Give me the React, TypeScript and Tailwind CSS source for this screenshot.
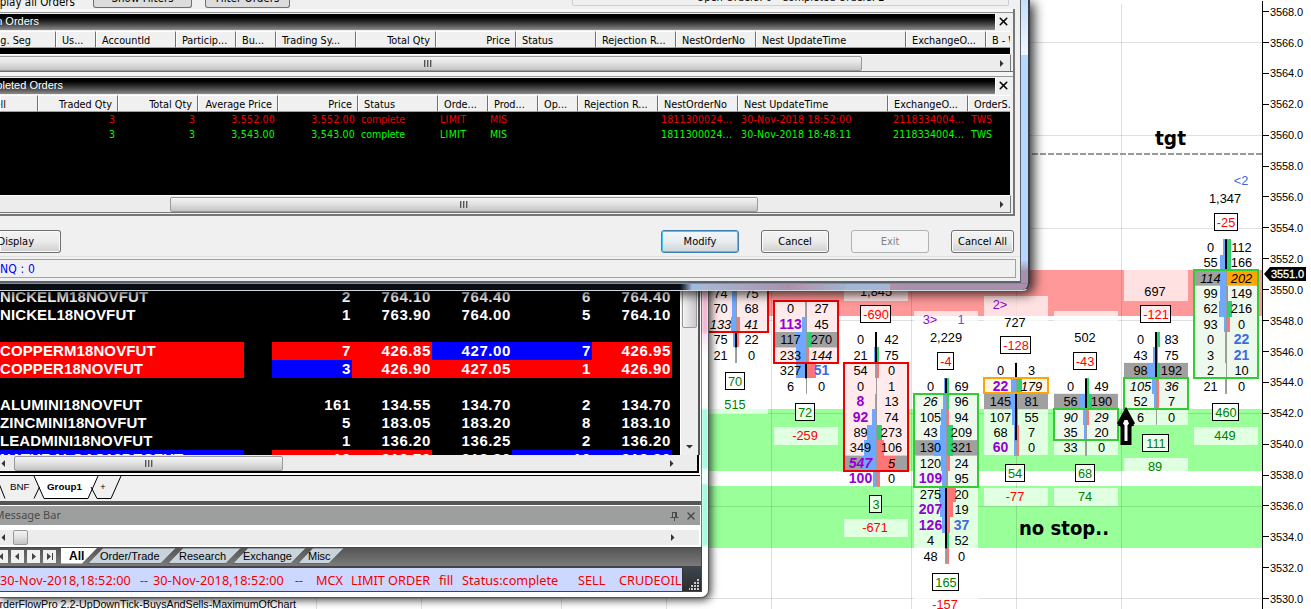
import React from 'react';
import { X } from 'lucide-react';

type CellStyle = 'p' | 'b' | 'i' | 'pi';

interface Row {
    l: string;
    r: string;
    ls?: CellStyle;
    rs?: CellStyle;
    // bar widths, delta colour of the right bar
    bl?: number;
    br?: number;
    c?: 'g' | 'r';
    gray?: boolean;
}

interface Column {
    x: number;
    start: number;
    rows: Row[];
    box: [number, number, string, string];
    bodies: [number, number][];
}

interface Label {
    x: number;
    y: number;
    text: string;
    color: string;
    boxed?: boolean;
    plate?: boolean;
}

const ROW = 15.45;
const rowTop = (n: number) => 270.2 + n * ROW;

const RED = '#ff0000';
const GREEN = '#008000';

const columns: Column[] = [
    {
        x: 736, start: 1, box: [0, 4, '#f00000', '#ffebeb'], bodies: [[4, 5]],
        rows: [
            { l: '74', r: '75', bl: 4 },
            { l: '70', r: '68', bl: 4 },
            { l: '133', r: '41', ls: 'i', rs: 'i', bl: 5, br: 3, c: 'r' },
            { l: '75', r: '22', bl: 3, br: 2, c: 'r' },
            { l: '21', r: '0', bl: 1 },
        ],
    },
    {
        x: 806, start: 2, box: [2, 6, '#f00000', '#ffebeb'], bodies: [[6, 7]],
        rows: [
            { l: '0', r: '27', bl: 1 },
            { l: '113', r: '45', ls: 'p', bl: 4 },
            { l: '117', r: '270', bl: 10, br: 5, c: 'g', gray: true },
            { l: '233', r: '144', rs: 'i', bl: 10, br: 2, c: 'r' },
            { l: '327', r: '51', rs: 'b', bl: 10, br: 9, c: 'r' },
            { l: '6', r: '0' },
        ],
    },
    {
        x: 876, start: 4, box: [6, 13, '#f00000', '#ffebeb'], bodies: [[4, 6]],
        rows: [
            { l: '0', r: '42' },
            { l: '21', r: '75', bl: 2, br: 2, c: 'g' },
            { l: '54', r: '0', bl: 1, br: 2, c: 'r' },
            { l: '0', r: '1' },
            { l: '8', r: '13', ls: 'p', bl: 1 },
            { l: '92', r: '74', ls: 'p', bl: 4 },
            { l: '89', r: '273', bl: 9, br: 5, c: 'g' },
            { l: '349', r: '106', bl: 12, br: 7, c: 'r' },
            { l: '547', r: '5', ls: 'pi', rs: 'i', bl: 15, br: 18, c: 'r', gray: true },
            { l: '100', r: '0', ls: 'p', bl: 3, br: 3, c: 'r' },
        ],
    },
    {
        x: 946, start: 7, box: [8, 14, '#32cd32', '#eef9ee'], bodies: [[7, 8], [14, 18]],
        rows: [
            { l: '0', r: '69', bl: 2, br: 2, c: 'g' },
            { l: '26', r: '96', ls: 'i', bl: 3, br: 2, c: 'g' },
            { l: '105', r: '94', bl: 5, br: 2, c: 'r' },
            { l: '43', r: '209', bl: 6, br: 6, c: 'g' },
            { l: '130', r: '321', bl: 12, br: 6, c: 'g', gray: true },
            { l: '120', r: '24', bl: 5, br: 3, c: 'r' },
            { l: '109', r: '95', ls: 'p', bl: 4, br: 1, c: 'r' },
            { l: '275', r: '20', bl: 7, br: 9, c: 'r' },
            { l: '207', r: '19', ls: 'p', bl: 6, br: 6, c: 'r' },
            { l: '126', r: '37', ls: 'p', rs: 'b', bl: 4, br: 3, c: 'r' },
            { l: '4', r: '52', bl: 1, br: 2, c: 'g' },
            { l: '48', r: '0', bl: 1, br: 2, c: 'r' },
        ],
    },
    {
        x: 1016, start: 6, box: [7, 8, '#ffa500', '#fff5e6'], bodies: [[6, 7], [8, 11]],
        rows: [
            { l: '0', r: '3' },
            { l: '22', r: '179', ls: 'p', rs: 'i', bl: 5, br: 5, c: 'g' },
            { l: '145', r: '81', bl: 6, br: 1, c: 'r', gray: true },
            { l: '107', r: '55', bl: 4, br: 1, c: 'r' },
            { l: '68', r: '7', bl: 2, br: 2, c: 'r' },
            { l: '60', r: '0', ls: 'p', bl: 2, br: 2, c: 'r' },
        ],
    },
    {
        x: 1086, start: 7, box: [9, 11, '#32cd32', '#eef9ee'], bodies: [[7, 9]],
        rows: [
            { l: '0', r: '49', br: 2, c: 'g' },
            { l: '56', r: '190', bl: 6, br: 5, c: 'g', gray: true },
            { l: '90', r: '29', ls: 'i', rs: 'i', bl: 3, br: 2, c: 'r' },
            { l: '35', r: '20', bl: 2 },
            { l: '33', r: '0', bl: 1 },
        ],
    },
    {
        x: 1156, start: 4, box: [7, 9, '#32cd32', '#eef9ee'], bodies: [[4, 7]],
        rows: [
            { l: '0', r: '83', bl: 1, br: 3, c: 'g' },
            { l: '43', r: '75', bl: 3, br: 1, c: 'g' },
            { l: '98', r: '192', bl: 8, br: 3, c: 'g', gray: true },
            { l: '105', r: '36', ls: 'i', rs: 'i', bl: 4, br: 2, c: 'r' },
            { l: '52', r: '7', bl: 2, br: 2, c: 'r' },
            { l: '6', r: '0' },
        ],
    },
    {
        x: 1226, start: -2, box: [0, 7, '#32cd32', '#eef9ee'], bodies: [[-2, 0]],
        rows: [
            { l: '0', r: '112', bl: 3, br: 4, c: 'g' },
            { l: '55', r: '166', bl: 6, br: 4, c: 'g' },
            { l: '114', r: '202', ls: 'i', rs: 'i', bl: 6 },
            { l: '99', r: '149', bl: 6, br: 1, c: 'g' },
            { l: '62', r: '216', bl: 7, br: 5, c: 'g' },
            { l: '93', r: '0', bl: 2, br: 3, c: 'r' },
            { l: '0', r: '22', rs: 'b', bl: 1 },
            { l: '3', r: '21', rs: 'b', bl: 1 },
            { l: '2', r: '10' },
            { l: '21', r: '0', bl: 1 },
        ],
    },
];

const labels: Label[] = [
    { x: 735, y: 381, text: '70', color: GREEN, boxed: true },
    { x: 735, y: 404, text: '515', color: GREEN, plate: true },
    { x: 805, y: 412, text: '72', color: GREEN, boxed: true },
    { x: 805, y: 435, text: '-259', color: RED, plate: true },
    { x: 876, y: 291, text: '1,845', color: '#000', plate: true },
    { x: 876, y: 314, text: '-690', color: RED, boxed: true },
    { x: 876, y: 504, text: '3', color: GREEN, boxed: true },
    { x: 875, y: 527, text: '-671', color: RED, plate: true },
    { x: 930, y: 319, text: '3>', color: '#9400d3' },
    { x: 961, y: 319, text: '1', color: '#7448dd' },
    { x: 946, y: 337, text: '2,229', color: '#000' },
    { x: 946, y: 361, text: '-4', color: RED, boxed: true },
    { x: 946, y: 582, text: '165', color: GREEN, boxed: true },
    { x: 945, y: 604, text: '-157', color: RED, plate: true },
    { x: 1000, y: 304, text: '2>', color: '#9400d3' },
    { x: 1015, y: 322, text: '727', color: '#000' },
    { x: 1016, y: 345, text: '-128', color: RED, boxed: true },
    { x: 1015, y: 473, text: '54', color: GREEN, boxed: true },
    { x: 1015, y: 496, text: '-77', color: RED, plate: true },
    { x: 1085, y: 337, text: '502', color: '#000' },
    { x: 1085, y: 361, text: '-43', color: RED, boxed: true },
    { x: 1085, y: 473, text: '68', color: GREEN, boxed: true },
    { x: 1085, y: 496, text: '74', color: GREEN, plate: true },
    { x: 1155, y: 291, text: '697', color: '#000' },
    { x: 1156, y: 314, text: '-121', color: RED, boxed: true },
    { x: 1156, y: 443, text: '111', color: GREEN, boxed: true },
    { x: 1155, y: 466, text: '89', color: GREEN, plate: true },
    { x: 1241, y: 180, text: '<2', color: '#4169e1' },
    { x: 1225, y: 198, text: '1,347', color: '#000' },
    { x: 1226, y: 222, text: '-25', color: RED, boxed: true },
    { x: 1226, y: 412, text: '460', color: GREEN, boxed: true },
    { x: 1225, y: 435, text: '449', color: GREEN, plate: true },
];

// translucent strips behind the columns: x, top, bottom
const plates: [number, number, number][] = [
    [736, 285, 364],
    [946, 311, 564],
    [1016, 296, 455],
    [1086, 311, 455],
    [1156, 270, 301],
    [1156, 332, 425],
];

const prices = Array.from({ length: 20 }, (_, i) => 3568 - i * 2);

const cellFont = (s?: CellStyle) => ({
    fontWeight: s && s !== 'i' ? 700 : 400,
    fontStyle: s === 'i' || s === 'pi' ? 'italic' : 'normal',
    fontSize: s && s !== 'i' ? 14 : 12.8,
    fill: s === 'p' || s === 'pi' ? '#9400d3' : s === 'b' ? '#4169e1' : '#000',
});

const boxWidth = (text: string) => (text.startsWith('-') ? 8.5 : 5) + text.replace('-', '').length * 7;

const plateLeft = (x: number) => Math.floor(x / 10) * 10 + 6 - 32;

const FootprintColumn = ({ col }: { col: Column }) => {
    const [from, to, stroke, fill] = col.box;
    const last = col.start + col.rows.length;
    return (
        <g>
            <rect x={col.x - 31.5} y={rowTop(from)} width={63} height={(to - from) * ROW} fill={fill} />
            {col.rows.map((row, i) => {
                const y = rowTop(col.start + i);
                return (
                    <g key={i}>
                        {row.gray && <rect x={col.x - 32} y={y} width={64} height={ROW} fill="#a0a0a0" />}
                        {row.r === '202' && (
                            <>
                                <rect x={col.x - 32} y={y} width={32} height={ROW} fill="#a0a0a0" />
                                <rect x={col.x + 1} y={y} width={31} height={ROW} fill="#ffa500" />
                            </>
                        )}
                    </g>
                );
            })}
            <line x1={col.x + 0.5} x2={col.x + 0.5} y1={rowTop(col.start)} y2={rowTop(last)} stroke="#999" />
            {col.rows.map((row, i) => {
                const y = rowTop(col.start + i);
                return (
                    <g key={i} shapeRendering="crispEdges">
                        {row.bl && <rect x={col.x - row.bl} y={y} width={row.bl} height={ROW} fill="#6ea8ff" />}
                        {row.br && <rect x={col.x + 1} y={y} width={row.br} height={ROW} fill={row.c === 'g' ? '#2fd070' : '#ff7474'} />}
                    </g>
                );
            })}
            {col.bodies.map(([a, b]) => (
                <rect key={a} x={col.x - 1} y={rowTop(a)} width={2} height={(b - a) * ROW} fill="#000" />
            ))}
            <rect x={col.x - 32} y={Math.round(rowTop(from))} width={64} height={Math.round((to - from) * ROW)} fill="none" stroke={stroke} strokeWidth={2} />
            {col.rows.map((row, i) => {
                const y = Math.round(rowTop(col.start + i) + 12.3);
                return (
                    <g key={i}>
                        <text x={col.x - 15.5} y={y} {...cellFont(row.ls)}>{row.l}</text>
                        <text x={col.x + 15.5} y={y} {...cellFont(row.rs)}>{row.r}</text>
                    </g>
                );
            })}
        </g>
    );
};

const Chart = () => (
    <svg className="absolute inset-0" width={1311} height={609} fontFamily="'Liberation Sans', Arial, sans-serif" fontSize={12.8} textAnchor="middle">
        <rect x={700} y={270} width={562} height={46} fill="#ff9999" />
        <rect x={700} y={409} width={562} height={62} fill="#99ff99" />
        <rect x={700} y={486} width={562} height={62} fill="#99ff99" />
        <g stroke="#000" strokeOpacity={0.12}>
            {[42.5, 135.5, 228.5, 320.5, 413.5, 506.5, 598.5].map((y) => (
                <line key={y} x1={0} x2={1262} y1={y} y2={y} />
            ))}
            {[71.5, 211.5, 316.5, 421.5, 561.5, 666.5, 771.5, 911.5, 1016.5, 1121.5].map((x) => (
                <line key={x} x1={x} x2={x} y1={4} y2={609} />
            ))}
        </g>
        <line x1={1032} x2={1262} y1={154} y2={154} stroke="#999" strokeWidth={2} strokeDasharray="6 2" />
        {plates.map(([x, top, bottom]) => (
            <rect key={`${x}-${top}`} x={x - 32} y={top} width={64} height={bottom - top} fill="#fff" fillOpacity={0.7} />
        ))}
        {labels.filter((l) => l.plate).map((l) => (
            <rect key={`${l.x}-${l.y}`} x={plateLeft(l.x)} y={l.y - 8} width={64} height={18} fill="#fff" fillOpacity={0.7} />
        ))}
        {columns.map((col) => <FootprintColumn key={col.x} col={col} />)}
        {labels.map((l) => {
            const w = boxWidth(l.text);
            return (
                <g key={`${l.x}-${l.y}`}>
                    {l.boxed && (
                        <rect x={Math.round(l.x - w / 2) - 0.5} y={l.y - 8.5} width={Math.round(w)} height={17} fill="#fff" fillOpacity={0.8} stroke="#000" />
                    )}
                    <text x={l.x} y={l.y + 4.5} fill={l.color}>{l.text}</text>
                </g>
            );
        })}
        <rect x={1262} y={1} width={1} height={608} fill="#000" />
        <g textAnchor="start" fontSize={11}>
            {prices.map((p, i) => (
                <g key={p}>
                    <rect x={1263} y={Math.round(11 + i * 30.9)} width={6} height={1} fill="#000" />
                    <text x={1270} y={Math.round(15.6 + i * 30.9)} textLength={33}>{p}.0</text>
                </g>
            ))}
            <path d="M1264 274 L1270 267 H1306 V281 H1270 Z" fill="#000" />
            <text x={1271} y={278} fill="#fff" stroke="#fff" strokeWidth={0.3} textLength={33}>3551.0</text>
        </g>
        <g fontFamily="'DejaVu Sans Condensed', 'DejaVu Sans', sans-serif" fontWeight={700} fontSize={19.5} textAnchor="start">
            <text x={1155} y={145} textLength={31} lengthAdjust="spacingAndGlyphs">tgt</text>
            <text x={1019} y={535} textLength={90} lengthAdjust="spacingAndGlyphs">no stop..</text>
        </g>
        <path d="M1126 411 L1132.5 423 L1129.5 426 V443 H1122.5 V426 L1119.5 423 Z" fill="#fff" stroke="#000" strokeWidth={4} strokeLinejoin="miter" />
        <path d="M1126 408 L1134 426 H1130 L1127.5 420 H1124.5 L1122 426 H1118 Z" fill="#000" />
    </svg>
);

const Arrow = ({ dir, className = '' }: { dir: 'left' | 'right' | 'down'; className?: string }) => (
    <svg width="7" height="7" viewBox="0 0 7 7" className={className}>
        {dir === 'left' && <path d="M5 0 V7 L1.5 3.5 Z" fill="#333" />}
        {dir === 'right' && <path d="M2 0 V7 L5.5 3.5 Z" fill="#333" />}
        {dir === 'down' && <path d="M0 2 H7 L3.5 5.5 Z" fill="#333" />}
    </svg>
);

const Grip = () => (
    <div className="flex gap-px">
        <div className="h-[7px] w-[2px] border-l border-[#555] bg-[#aaa]" />
        <div className="h-[7px] w-[2px] border-l border-[#555] bg-[#aaa]" />
        <div className="h-[7px] w-[2px] border-l border-[#555] bg-[#aaa]" />
    </div>
);

const thumb = 'flex h-[15px] items-center justify-center rounded-xs border border-[#999] bg-linear-to-b from-[#f4f4f4] via-[#e2e2e2] via-45% to-[#c4c4c8]';

const openHeaders = [
    { text: 'Exchg. Seg', w: 'w-[56px]', cls: 'justify-end pr-[24px]' },
    { text: 'Us...', w: 'w-[40px]' },
    { text: 'AccountId', w: 'w-[80px]' },
    { text: 'Particip...', w: 'w-[60px]' },
    { text: 'Bu...', w: 'w-[40px]' },
    { text: 'Trading Sy...', w: 'w-[80px]' },
    { text: 'Total Qty', w: 'w-[80px]', cls: 'justify-end pr-[5px]' },
    { text: 'Price', w: 'w-[80px]', cls: 'justify-end pr-[5px]' },
    { text: 'Status', w: 'w-[80px]' },
    { text: 'Rejection R...', w: 'w-[80px]' },
    { text: 'NestOrderNo', w: 'w-[80px]' },
    { text: 'Nest UpdateTime', w: 'w-[150px]' },
    { text: 'ExchangeO...', w: 'w-[80px]' },
    { text: 'B - W', w: 'w-[40px]' },
];

const completedHeaders = [
    { text: 'Buy/Sell', w: 'w-[38px]', cls: 'justify-end pr-[31px]' },
    { text: 'Traded Qty', w: 'w-[80px]', cls: 'justify-end pr-[5px]' },
    { text: 'Total Qty', w: 'w-[80px]', cls: 'justify-end pr-[5px]' },
    { text: 'Average Price', w: 'w-[80px]', cls: 'justify-end pr-[5px]' },
    { text: 'Price', w: 'w-[80px]', cls: 'justify-end pr-[5px]' },
    { text: 'Status', w: 'w-[80px]' },
    { text: 'Orde...', w: 'w-[50px]' },
    { text: 'Prod...', w: 'w-[50px]' },
    { text: 'Op...', w: 'w-[40px]' },
    { text: 'Rejection R...', w: 'w-[80px]' },
    { text: 'NestOrderNo', w: 'w-[80px]' },
    { text: 'Nest UpdateTime', w: 'w-[150px]' },
    { text: 'ExchangeO...', w: 'w-[80px]' },
    { text: 'OrderS...', w: 'w-[60px]' },
];

const completedOrders = [
    { price: '3,552.00', time: '30-Nov-2018 18:52:00', color: 'text-[#f00000]' },
    { price: '3,543.00', time: '30-Nov-2018 18:48:11', color: 'text-[#00ff00]' },
];

const HeaderRow = ({ items }: { items: { text: string; w: string; cls?: string }[] }) => (
    <div className="flex h-[17px] w-[1010px] overflow-hidden bg-[#f0f0f0] text-[10.8px] leading-[14px]">
        {items.map((h, i) => (
            <div
                key={i}
                className={`flex shrink-0 items-start overflow-hidden whitespace-nowrap border-t border-r border-t-white border-r-[#707070] border-b border-b-[#a0a0a0] pt-[2px] pl-[6px] shadow-[inset_1px_0_0_#fff] ${h.w} ${h.cls ?? ''}`}
            >
                {h.text}
            </div>
        ))}
    </div>
);

const PaneTitle = ({ text, w }: { text: string; w: string }) => (
    <div className="flex h-[17px]">
        <div className="h-[16px] w-[995px] border-t border-black bg-linear-to-b from-black to-[#8c8c8c] font-['Liberation_Sans',Arial,sans-serif] text-[11px] leading-[13px] text-white">
            <div className={`flex justify-end overflow-hidden whitespace-nowrap ${w}`}>{text}</div>
        </div>
        <div className="flex w-[15px] items-center justify-center border-l border-white bg-[#f0f0f0] pb-[3px]">
            <X size={13} strokeWidth={2.8} color="#000" className="shrink-0" />
        </div>
    </div>
);

const button = 'flex h-[23px] items-center justify-center rounded-[3px] border pt-px whitespace-nowrap';
const buttonFace = 'border-[#707070] bg-linear-to-b from-[#f3f3f3] via-[#ebebeb] via-50% to-[#cfcfcf] shadow-[inset_0_0_0_1px_#fbfbfb]';

const OrdersWindow = () => (
    <div className="absolute top-0 left-0 h-[291px] w-[1030px] overflow-hidden rounded-br-lg border-r-2 border-b border-[#3a3f4a] border-b-[#cfd8dc] bg-[#0a0e13] font-['DejaVu_Sans_Condensed','DejaVu_Sans',sans-serif] text-[10.5px] text-black">
        <div className="flex h-[283px]">
            <div className="h-[283px] w-[1021px] border-r border-b-2 border-[#5c6470] bg-[#f0f0f0]">
                {/* Filter strip, cut off by the top edge */}
                <div className="flex h-[9px] items-start">
                    <div className="-mt-[5px] flex w-[75px] justify-end whitespace-nowrap text-[11.5px] leading-[14px]">Display all Orders</div>
                    <div className="ml-[18px] flex h-[8px] w-[99px] justify-center rounded-b-[3px] border border-t-0 border-[#707070] bg-[#dcdcdc]">
                        <span className="-mt-[10px] text-[11.5px]">Show Filters</span>
                    </div>
                    <div className="ml-[13px] flex h-[8px] w-[85px] justify-center rounded-b-[3px] border border-t-0 border-[#707070] bg-[#dcdcdc]">
                        <span className="-mt-[10px] text-[11.5px]">Filter Orders</span>
                    </div>
                    <div className="ml-[282px] flex h-[6px] w-[437px] justify-center rounded-b-[2px] border border-t-0 border-[#c5d0dc]">
                        <span className="-mt-[10px] whitespace-pre text-[11px]">Open Orders: 0   Completed Orders: 2</span>
                    </div>
                </div>
                <div className="h-[207px] w-[1015px] border-r-2 border-b-2 border-[#777]">
                    <div className="mb-px h-[4px] border-b border-[#909090] bg-[#f8f8f8]" />
                    <PaneTitle text="Open Orders" w="w-[39px]" />
                    <HeaderRow items={openHeaders} />
                    <div className="h-[6px] w-[1010px] bg-black" />
                    <div className="flex h-[17px] w-[1011px] items-center border-t border-r border-white border-r-[#777] bg-[#ececec]">
                        <div className={`${thumb} -ml-[6px] w-[868px]`}><Grip /></div>
                        <Arrow dir="right" className="ml-[136px]" />
                    </div>
                    <div className="mb-px h-[6px] border-t border-b border-[#707070] border-b-[#999] bg-[#f4f4f4]" />
                    <PaneTitle text="Completed Orders" w="w-[63px]" />
                    <HeaderRow items={completedHeaders} />
                    <div className="h-[83px] w-[1010px] overflow-hidden bg-black whitespace-nowrap">
                        {completedOrders.map((o) => (
                            <div key={o.time} className={`flex h-[15px] items-center ${o.color}`}>
                                <div className="w-[115px] text-right">3</div>
                                <div className="w-[80px] text-right">3</div>
                                <div className="w-[80px] text-right tracking-[0.2px]">{o.price}</div>
                                <div className="w-[80px] text-right tracking-[0.2px]">{o.price}</div>
                                <div className="w-[85px] pl-[6px]">complete</div>
                                <div className="w-[50px] tracking-[0.3px]">LIMIT</div>
                                <div className="w-[171px]">MIS</div>
                                <div className="w-[80px] tracking-[0.15px]">1811300024...</div>
                                <div className="w-[152px] tracking-[0.2px]">{o.time}</div>
                                <div className="w-[78px] tracking-[0.15px]">2118334004...</div>
                                <div>TWS</div>
                            </div>
                        ))}
                    </div>
                    <div className="flex h-[18px] w-[1011px] items-center border-t border-r border-b border-white border-r-[#777] border-b-[#777] bg-[#ececec]">
                        <div className={`${thumb} ml-[170px] w-[588px]`}><Grip /></div>
                        <Arrow dir="right" className="ml-[240px]" />
                    </div>
                </div>
                <div className="flex h-[41px] items-start border-b border-[#e0e0e0] pt-[14px] text-[11px]">
                    <div className={`${button} ${buttonFace} w-[61px] justify-end rounded-l-none border-l-0 pr-[26px]`}>Display</div>
                    <div className={`${button} ml-[600px] w-[78px] border-[#3c7fb1] bg-linear-to-b from-[#f0f6f9] via-[#e8edf0] via-50% to-[#cfd4d8] shadow-[inset_0_0_0_1px_#46c8f0]`}>Modify</div>
                    <div className={`${button} ${buttonFace} ml-[22px] w-[68px]`}>Cancel</div>
                    <div className={`${button} ml-[22px] w-[78px] border-[#adb2b5] bg-[#f4f4f4] text-[#838383]`}>Exit</div>
                    <div className={`${button} ${buttonFace} ml-[22px] w-[63px]`}>Cancel All</div>
                </div>
                <div className="mt-[2px] flex h-[19px] w-[1016px] items-center border border-l-0 border-[#a0a0a0] pt-px text-[12px] tracking-[0.2px] text-[#0000ff]">NQ : 0</div>
            </div>
            <div className="w-[7px] bg-[#b5d8ff]">
                <div className="h-[55px] bg-linear-to-b from-[#c5defa] to-[#f2f8ff]" />
                <div className="mt-[205px] h-[23px] bg-linear-to-b from-[#b5d8ff] to-[#a890ac] to-50%" />
            </div>
        </div>
        <div className="flex h-[7px] border-t border-[#8a8a8a]">
            <div className="w-[680px] bg-[#0a0e13]" />
            <div className="w-[20px] bg-linear-to-r from-[#0a0e13] to-[#9dbce0] to-60%" />
            <div className="w-[90px] bg-linear-to-r from-[#a9b8d6] to-[#a890ac]" />
            <div className="w-[56px] bg-linear-to-r from-[#b590a8] to-[#a0b2d2]" />
            <div className="w-[44px] bg-[#a3b6d6]" />
            <div className="flex-1 bg-linear-to-r from-[#b590a8] to-[#a890ac] to-10%" />
        </div>
    </div>
);

interface Quote {
    name: string;
    nameBg?: string;
    cells: string[];
    bgs?: string[];
}

const R = 'bg-[#ff0000]';
const B = 'bg-[#0000ff]';

const quotes: Quote[] = [
    { name: 'NICKELM18NOVFUT', cells: ['2', '764.10', '764.40', '6', '764.40'] },
    { name: 'NICKEL18NOVFUT', cells: ['1', '763.90', '764.00', '5', '764.10'] },
    { name: '', cells: [] },
    { name: 'COPPERM18NOVFUT', nameBg: R, cells: ['7', '426.85', '427.00', '7', '426.95'], bgs: [R, R, B, B, R] },
    { name: 'COPPER18NOVFUT', nameBg: R, cells: ['3', '426.90', '427.05', '1', '426.90'], bgs: [B, R, R, R, R] },
    { name: '', cells: [] },
    { name: 'ALUMINI18NOVFUT', cells: ['161', '134.55', '134.70', '2', '134.70'] },
    { name: 'ZINCMINI18NOVFUT', cells: ['5', '183.05', '183.20', '8', '183.10'] },
    { name: 'LEADMINI18NOVFUT', cells: ['1', '136.20', '136.25', '2', '136.20'] },
    { name: 'NATURALGAS18DECFUT', nameBg: B, cells: ['10', '318.70', '318.80', '10', '318.80'], bgs: [R, R, '', B, B] },
];

const messageTabs = [
    { text: 'Order/Trade', w: 'w-[79px]' },
    { text: 'Research', w: 'w-[64px]' },
    { text: 'Exchange', w: 'w-[65px]' },
    { text: 'Misc', w: 'w-[40px]' },
];

const message = [
    { text: '30-Nov-2018,18:52:00', w: 'w-[140px]' },
    { text: '--', w: 'w-[13px]' },
    { text: '30-Nov-2018,18:52:00', w: 'w-[142px]' },
    { text: '--', w: 'w-[21px]' },
    { text: 'MCX', w: 'w-[35px]' },
    { text: 'LIMIT ORDER', w: 'w-[88px]' },
    { text: 'fill', w: 'w-[23px]' },
    { text: 'Status:complete', w: 'w-[116px]' },
    { text: 'SELL', w: 'w-[41px]' },
    { text: 'CRUDEOIL', w: 'w-[63px]' },
];

const navGlyphs = ['M7 2 V9 L3 5.5 Z M1.5 2 H2.5 V9 H1.5 Z', 'M7 2 V9 L3 5.5 Z', 'M4 2 V9 L8 5.5 Z', 'M3 2 V9 L7 5.5 Z M8 2 H9 V9 H8 Z'];

const MarketWindow = () => (
    <div className="absolute top-[200px] left-0 flex h-[398px] w-[709px] overflow-hidden rounded-br-lg border-r border-b border-[#555] bg-white pt-[88px] font-['Liberation_Sans',Arial,sans-serif] shadow-[2px_2px_8px_rgba(0,0,0,0.75)]">
        <div className="h-[304px] w-[702px] border-r border-b border-[#444]">
            {/* Quotes */}
            <div className="flex h-[167px] w-[700px] border-r-2 border-[#555] bg-[#f0f0f0]">
                <div className="h-[167px] w-[680px] overflow-hidden bg-black">
                    {quotes.map((q, i) => (
                        <div key={i} className="flex h-[18px] items-center text-[15px] leading-[18px] font-bold text-white">
                            <div className={`mr-[28px] h-[18px] w-[244px] tracking-[0.1px] whitespace-nowrap ${q.nameBg ?? ''}`}>{q.name}</div>
                            {q.cells.map((c, j) => (
                                <div key={j} className={`h-[18px] w-[80px] pr-[1px] text-right tracking-[0.6px] ${q.bgs ? q.bgs[j] : ''}`}>{c}</div>
                            ))}
                        </div>
                    ))}
                </div>
                <div className="flex w-[17px] flex-col items-center justify-between border-l border-white bg-[#eee] pb-[5px]">
                    <div className="h-[40px] w-[15px] rounded-xs border border-[#999] bg-linear-to-r from-[#f4f4f4] to-[#c8c8cc]" />
                    <Arrow dir="down" />
                </div>
            </div>
            <div className="flex h-[18px] w-[699px] items-center border-r-2 border-b-2 border-black bg-[#ececec]">
                <Arrow dir="left" className="mr-[7px]" />
                <div className={`${thumb} w-[269px]`}><Grip /></div>
                <Arrow dir="right" className="ml-[385px]" />
            </div>
            {/* Sheet tabs */}
            <div className="mt-[2px] h-[26px] w-[700px] border-t border-black bg-[#f0f0f0] text-[9.8px]">
                <div className="relative h-[24px]">
                    <svg width="130" height="24" className="absolute inset-0" fill="none" stroke="#000">
                        <path d="M34 0 L44 22.5 H88 L98 0 Z" fill="#fff" stroke="none" />
                        <path d="M-4 0 L5 22.5 M44 22.5 H88 M97 22.5 H111 M34 22.5 L39.5 11 M34 0 L44 22.5 M88 22.5 L98 0 M91 11 L97 22.5 M111 22.5 L121 0" />
                    </svg>
                    <div className="relative flex h-[22px] items-center">
                        <div className="w-[38px] pl-[10px]">BNF</div>
                        <div className="w-[55px] pl-[9px] font-bold">Group1</div>
                        <div className="pl-[7px]">+</div>
                    </div>
                </div>
            </div>
            <div className="h-[4px] bg-[#555]" />
            {/* Message bar */}
            <div className="flex h-[21px] w-[700px] items-center border-t border-b border-white bg-[#9d9f9e] text-[#4a4a4a]">
                <div className="flex w-[61px] justify-end overflow-hidden font-['Noto_Sans',sans-serif] text-[11px] whitespace-nowrap">Message Bar</div>
                <svg width="9" height="10" viewBox="0 0 9 10" className="ml-[609px]" fill="none" stroke="#4a4a4a">
                    <path d="M2.5 1 V6 M6.5 1 V6 M5.5 1 V6 M2 1.5 H7 M0.5 6.5 H8.5 M4.5 6.5 V10" />
                </svg>
                <X size={12} strokeWidth={3} className="ml-[6px]" />
            </div>
            <div className="flex h-[21px] w-[699px] items-center border-t-4 border-b-2 border-white bg-[#ececec]">
                <Arrow dir="left" className="mr-[6px]" />
                <div className={`${thumb} w-[15px]`} />
                <Arrow dir="right" className="ml-[641px]" />
            </div>
            <div className="flex h-[21px] items-start border-t border-b-2 border-[#444] bg-linear-to-b from-[#555] to-[#7b7b7b] text-[11px]">
                <div className="flex w-[61px] gap-[3px] pt-[2px]">
                    {navGlyphs.map((d, i) => (
                        <svg key={i} width="13" height="13" viewBox="-1 -1 13 13" className={`shrink-0 bg-[#f0f0f0] ${i === 0 ? '-ml-[5px]' : ''}`}>
                            <path d={d} fill="#444" />
                        </svg>
                    ))}
                </div>
                <div className="relative flex h-[16px] items-center">
                    <svg width="290" height="16" className="absolute inset-0" stroke="#666">
                        <path d="M237 15.5 Q239 13 252 0 H283 L268 15.5 Z" fill="#c9d3dc" />
                        <path d="M172 15.5 Q174 13 187 0 H245 L230 15.5 Z" fill="#c9d3dc" />
                        <path d="M107 15.5 Q109 13 122 0 H180 L165 15.5 Z" fill="#c9d3dc" />
                        <path d="M27 15.5 Q29 13 42 0 H115 L100 15.5 Z" fill="#c9d3dc" />
                        <path d="M0 15.5 V0 H36 L21 15.5 Z" fill="#fff" stroke="none" />
                    </svg>
                    <div className="relative flex items-center">
                        <div className="w-[39px] pl-[8px] text-[12px] font-bold">All</div>
                        {messageTabs.map((t) => <div key={t.text} className={`${t.w} whitespace-nowrap`}>{t.text}</div>)}
                    </div>
                </div>
            </div>
            <div className="flex h-[23px] bg-[#333]">
                <div className="flex w-[682px] items-center overflow-hidden bg-[#ccd8ff] pt-[2px] font-['Noto_Sans',sans-serif] text-[12.7px] text-[#f00000]">
                    {message.map((m, i) => <div key={i} className={`${m.w} shrink-0 whitespace-nowrap ${i === 0 || i === 2 ? 'tracking-[0.1px]' : ''}`}>{m.text}</div>)}
                </div>
                <div className="ml-px flex w-[18px] items-end justify-end bg-linear-to-b from-[#3c4450] to-[#2c2c2c]">
                    <svg width="12" height="12" fill="#ccc">
                        <path d="M8 0h2v2h-2z M5 3h2v2h-2z M8 3h2v2h-2z M2 6h2v2h-2z M5 6h2v2h-2z M8 6h2v2h-2z M-1 9h2v2h-2z M2 9h2v2h-2z M5 9h2v2h-2z M8 9h2v2h-2z" />
                    </svg>
                </div>
            </div>
        </div>
        {/* Glass edge with the chart showing through */}
        <div className="flex h-[304px] w-[6px] flex-col blur-[1px]">
            <div className="h-[45px] bg-[#f3b8d4]" />
            <div className="h-[76px] bg-linear-to-b from-[#f8dcf4] to-white to-30%" />
            <div className="h-[60px] bg-[#a6fbdc]" />
            <div className="h-[15px] bg-[#eefffa]" />
            <div className="h-[62px] bg-[#a6fbdc]" />
        </div>
    </div>
);

const App: React.FC = () => {
    return (
        <div className="relative h-[609px] w-[1311px] overflow-hidden bg-white">
            <Chart />
            <div className="absolute bottom-0 left-0 flex h-[10px] w-[296px] justify-end overflow-visible font-['Liberation_Sans',Arial,sans-serif] text-[10.7px] leading-[10px] whitespace-nowrap">
                OrderFlowPro 2.2-UpDownTick-BuysAndSells-MaximumOfChart
            </div>
            <MarketWindow />
            <div className="absolute top-0 left-0 h-[291px] w-[1030px] rounded-br-lg shadow-[4px_3px_12px_rgba(0,0,0,0.8)]" />
            <OrdersWindow />
        </div>
    );
};

export default App;
